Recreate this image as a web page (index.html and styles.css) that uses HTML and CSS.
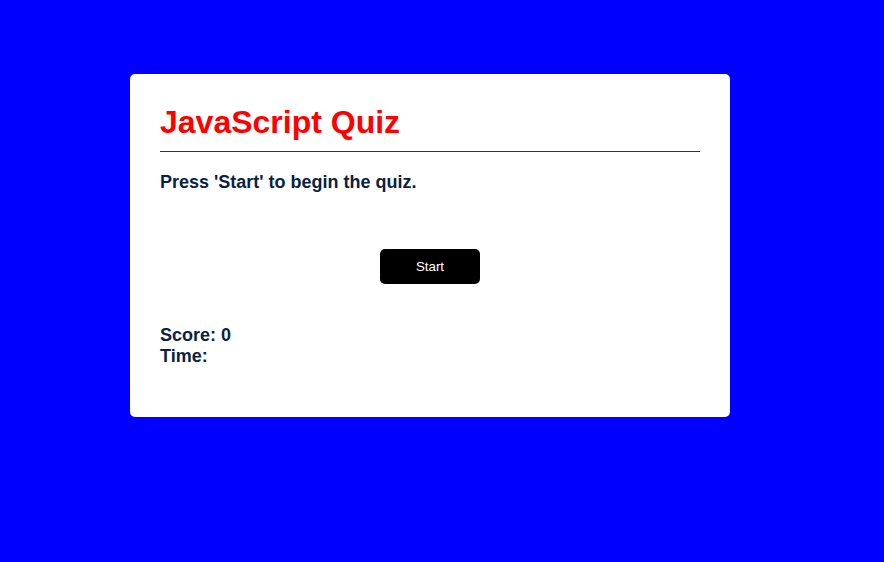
FILE: index.html
```html
<!DOCTYPE html>
<html lang="en">
<head>
<meta charset="utf-8">
<title>JavaScript Quiz</title>
<link rel="stylesheet" href="styles.css">
</head>
<body>
<main class="card">
  <h1 class="title">JavaScript Quiz</h1>
  <p class="question">Press 'Start' to begin the quiz.</p>
  <div class="actions">
    <button class="start-btn" type="button">Start</button>
  </div>
  <div class="stats">
    <div class="stat">Score: 0</div>
    <div class="stat">Time:</div>
  </div>
</main>
</body>
</html>
```
FILE: styles.css
```css
html, body {
  margin: 0;
  padding: 0;
}
body {
  background: #0000ff;
  font-family: "Liberation Sans", Arial, sans-serif;
  min-height: 562px;
  padding-top: 74px;
  box-sizing: border-box;
}
.card {
  width: 600px;
  height: 343px;
  box-sizing: border-box;
  margin-left: 130px;
  background: #ffffff;
  border-radius: 5px;
  padding: 30px;
}
.title {
  margin: 0;
  font-size: 32px;
  font-weight: bold;
  color: #ff0000;
  padding-bottom: 10px;
  border-bottom: 1px solid #333333;
}
.question {
  margin: 20px 0 0;
  font-size: 18px;
  font-weight: bold;
  color: #0a1f44;
}
.actions {
  display: flex;
  justify-content: center;
  margin-top: 56px;
}
.start-btn {
  width: 100px;
  height: 35px;
  border: none;
  border-radius: 5px;
  background: #000000;
  color: #ffffff;
  font-family: "Liberation Sans", Arial, sans-serif;
  font-size: 13.333px;
  padding: 0;
}
.stats {
  margin-top: 41px;
  font-size: 18px;
  font-weight: bold;
  color: #0a1f44;
}
```
